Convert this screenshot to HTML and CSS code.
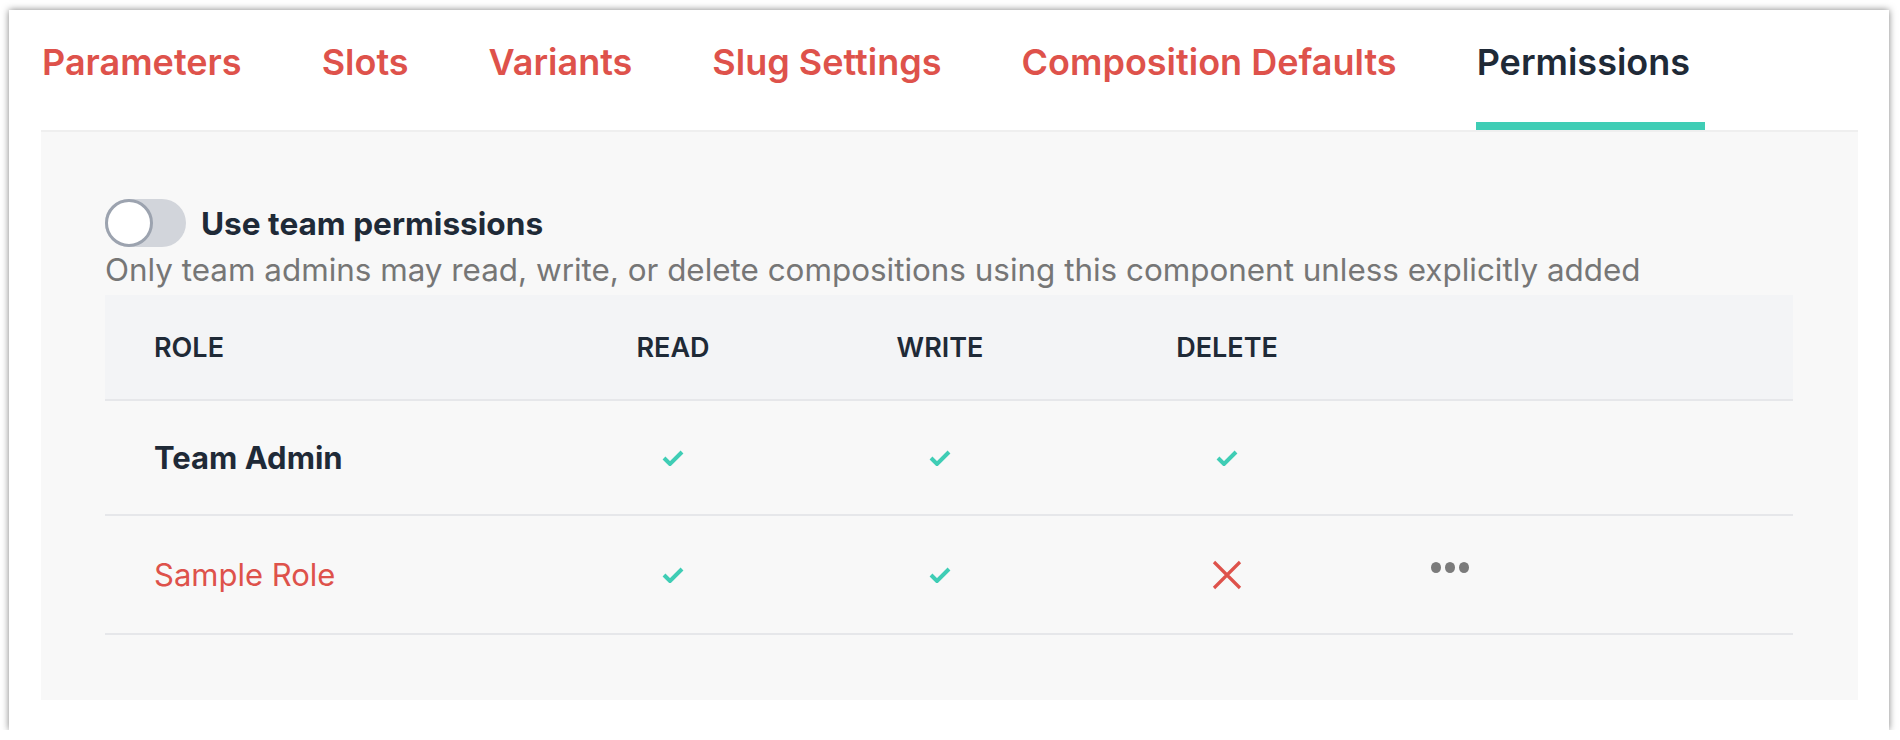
FILE: index.html
```html
<!DOCTYPE html>
<html lang="en">
<head>
<meta charset="utf-8">
<title>Permissions</title>
<link rel="stylesheet" href="styles.css">
</head>
<body>
<div class="card">
  <nav class="tabs">
    <a class="tab">Parameters</a>
    <a class="tab">Slots</a>
    <a class="tab">Variants</a>
    <a class="tab">Slug Settings</a>
    <a class="tab">Composition Defaults</a>
    <a class="tab active">Permissions</a>
  </nav>
  <section class="panel">
    <div class="toggle-row">
      <span class="switch"><span class="knob"></span></span>
      <span class="toggle-label">Use team permissions</span>
    </div>
    <p class="hint">Only team admins may read, write, or delete compositions using this component unless explicitly added</p>
    <div class="table">
      <div class="row head">
        <div class="cell role">Role</div>
        <div class="cell">Read</div>
        <div class="cell">Write</div>
        <div class="cell">Delete</div>
        <div class="cell"></div>
        <div class="cell"></div>
      </div>
      <div class="row r1">
        <div class="cell role name">Team Admin</div>
        <div class="cell"><svg class="check" viewBox="0 0 22 16"><path d="M2 8 L8 14 L20 2"/></svg></div>
        <div class="cell"><svg class="check" viewBox="0 0 22 16"><path d="M2 8 L8 14 L20 2"/></svg></div>
        <div class="cell"><svg class="check" viewBox="0 0 22 16"><path d="M2 8 L8 14 L20 2"/></svg></div>
        <div class="cell"></div>
        <div class="cell"></div>
      </div>
      <div class="row r2">
        <div class="cell role link">Sample Role</div>
        <div class="cell"><svg class="check" viewBox="0 0 22 16"><path d="M2 8 L8 14 L20 2"/></svg></div>
        <div class="cell"><svg class="check" viewBox="0 0 22 16"><path d="M2 8 L8 14 L20 2"/></svg></div>
        <div class="cell"><svg class="cross" viewBox="0 0 30 30"><path d="M2 2 L28 28 M28 2 L2 28"/></svg></div>
        <div class="cell"><span class="dots"><i></i><i></i><i></i></span></div>
        <div class="cell"></div>
      </div>
    </div>
  </section>
</div>
</body>
</html>
```
FILE: styles.css
```css
html, body {
  margin: 0;
  padding: 0;
  background: #ffffff;
}

body {
  font-family: Inter, "Noto Sans", "Liberation Sans", sans-serif;
  color: #1f2a37;
}

.card {
  margin: 10px 10px 0 9px;
  width: 1880px;
  height: 720px;
  box-sizing: border-box;
  background: #ffffff;
  box-shadow: 0 0 7px rgba(0, 0, 0, 0.5);
  padding: 0 31px 30px 32px;
  display: flex;
  flex-direction: column;
}

.tabs {
  display: flex;
  height: 120px;
  gap: 64px;
}

.tab {
  height: 120px;
  box-sizing: border-box;
  padding: 30px 15px 0 1px;
  line-height: 44px;
  font-size: 36px;
  font-weight: 600;
  color: #de524b;
  border-bottom: 8px solid transparent;
  cursor: pointer;
}

.tab.active {
  color: #1f2a37;
  border-bottom-color: #3fcdb5;
}

.panel {
  flex: 1;
  background: #f8f8f8;
  border-top: 2px solid #efefef;
  padding: 67px 65px 0 64px;
  display: flex;
  flex-direction: column;
}

.toggle-row {
  display: flex;
  align-items: center;
  gap: 15px;
  height: 48px;
}

.switch {
  width: 81px;
  height: 48px;
  border-radius: 24px;
  background: #d2d5db;
  display: flex;
  align-items: center;
}

.knob {
  width: 48px;
  height: 48px;
  box-sizing: border-box;
  border-radius: 50%;
  background: #ffffff;
  border: 3px solid #9ca3af;
}

.toggle-label {
  font-size: 31.6px;
  font-weight: 700;
  color: #1f2a37;
}

.hint {
  margin: 3px 0 5px;
  font-size: 31.4px;
  line-height: 40px;
  color: #767676;
}

.table {
  display: flex;
  flex-direction: column;
}

.row {
  display: grid;
  grid-template-columns: 460px 216px 318px 256px 190px 1fr;
  align-items: center;
  border-bottom: 2px solid #e6e7ea;
}

.row.head {
  height: 106px;
  box-sizing: border-box;
  background: #f3f4f6;
}

.row.r1 {
  height: 115px;
  box-sizing: border-box;
}

.row.r2 {
  height: 119px;
  box-sizing: border-box;
}

.cell {
  display: flex;
  justify-content: center;
  align-items: center;
}

.cell.role {
  justify-content: flex-start;
  padding-left: 49px;
}

.head .cell {
  font-size: 27px;
  font-weight: 600;
  text-transform: uppercase;
  color: #1f2a37;
}

.name {
  font-size: 31px;
  font-weight: 700;
  color: #1f2a37;
}

.link {
  font-size: 31px;
  font-weight: 400;
  color: #de524b;
}

.check {
  width: 22px;
  height: 16px;
  fill: none;
  stroke: #3fcdb5;
  stroke-width: 4;
}

.cross {
  width: 30px;
  height: 30px;
  fill: none;
  stroke: #de524b;
  stroke-width: 3.2;
}

.dots {
  display: flex;
  gap: 4px;
  margin-top: -14px;
}

.dots i {
  width: 10px;
  height: 11px;
  border-radius: 50%;
  background: #7b7b7b;
}
```
